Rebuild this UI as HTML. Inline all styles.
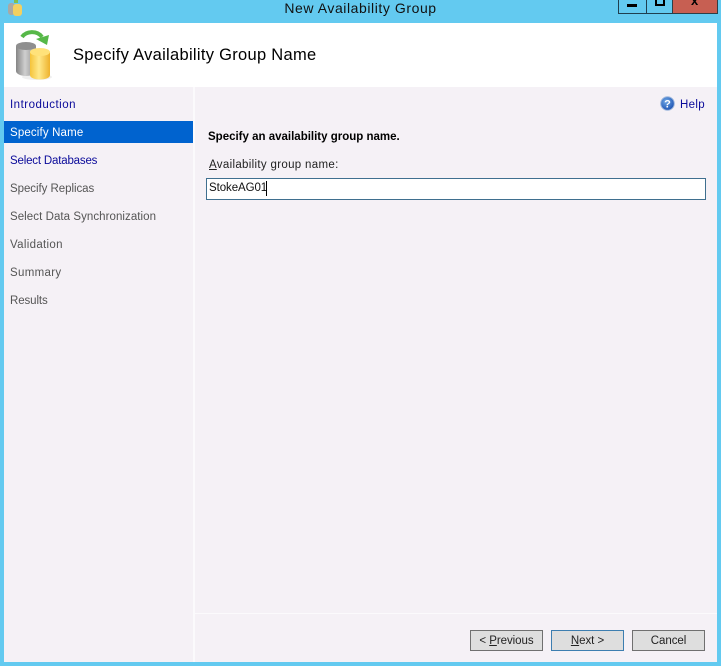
<!DOCTYPE html>
<html><head><meta charset="utf-8"><style>
html,body{margin:0;padding:0}
body{width:721px;height:666px;overflow:hidden;position:relative;background:#63caf0;font-family:"Liberation Sans",sans-serif;font-size:11.5px}
.a{position:absolute;white-space:nowrap}
.t{line-height:14px;letter-spacing:.32px}
.btn{position:absolute;top:630px;width:71px;height:19px;background:#dedede;border:1px solid #707070;text-align:center;line-height:21px;color:#222;font-size:11.5px;letter-spacing:-.05px}
u{text-decoration:underline}
</style></head><body>
<div class="a" style="left:0;top:-1px;width:721px;text-align:center;font-size:14px;line-height:18px;color:#111;letter-spacing:.57px">New Availability Group</div>
<svg class="a" style="left:7px;top:0" width="16" height="16" viewBox="0 0 16 16"><rect x="1" y="3" width="7" height="12" rx="3" fill="#a9a9a4"/><rect x="6" y="4" width="9" height="12" rx="3" fill="#f3d060"/><rect x="7" y="0" width="4" height="3" fill="#7fbf50"/></svg>
<div class="a" style="left:618px;top:-1px;width:100px;height:15px;box-sizing:border-box;border:1px solid #1f3f50;border-top:0"></div>
<div class="a" style="left:646px;top:0;width:1px;height:14px;background:#1f3f50"></div>
<div class="a" style="left:672px;top:0;width:46px;height:14px;box-sizing:border-box;background:#c75f52;border:1px solid #2d3f47;border-top:0"></div>
<div class="a" style="left:627px;top:4px;width:10px;height:3px;background:#000"></div>
<div class="a" style="left:655px;top:-3px;width:10px;height:9px;box-sizing:border-box;border:2px solid #000"></div>
<div class="a" style="left:691px;top:-7px;font:bold 13px/16px 'Liberation Sans',sans-serif;color:#000">x</div>

<div class="a" style="left:4px;top:23px;width:713px;height:64px;background:#fff"></div>
<div class="a" style="left:4px;top:87px;width:189px;height:575px;background:#f5f1f6"></div>
<div class="a" style="left:193px;top:87px;width:2px;height:575px;background:#fbfafc"></div>
<div class="a" style="left:195px;top:87px;width:522px;height:575px;background:#f5f1f6"></div>
<div class="a" style="left:195px;top:613px;width:522px;height:1px;background:#fbfafc"></div>

<svg class="a" style="left:13px;top:29px" width="44" height="54" viewBox="0 0 44 54">
<defs>
<linearGradient id="g" x1="0" x2="1" y1="0" y2="0"><stop offset="0" stop-color="#858585"/><stop offset=".45" stop-color="#cfcfcf"/><stop offset="1" stop-color="#8d8d8d"/></linearGradient>
<linearGradient id="y" x1="0" x2="1" y1="0" y2="0"><stop offset="0" stop-color="#f5c33a"/><stop offset=".45" stop-color="#ffe98a"/><stop offset="1" stop-color="#eeb12c"/></linearGradient>
</defs>
<ellipse cx="24" cy="48" rx="15" ry="3" fill="#efefef"/>
<path d="M3 17v25c0 3 5 5 10 5s10-2 10-5V17z" fill="url(#g)"/>
<ellipse cx="13" cy="17" rx="10" ry="4" fill="#8f8f8f"/>
<path d="M17 23v23c0 3 5 4.500 10 4.500S37 49 37 46V23z" fill="url(#y)"/>
<ellipse cx="27" cy="23" rx="10" ry="4" fill="#ffe27a"/>
<path d="M9 8C13 2 24 1 29 8" fill="none" stroke="#56b848" stroke-width="4"/>
<path d="M23 10L36 6L34 16Z" fill="#56b848"/>
</svg>
<div class="a" style="left:73px;top:45px;font-size:16.5px;line-height:20px;color:#000;letter-spacing:.29px">Specify Availability Group Name</div>

<div class="a" style="left:4px;top:121px;width:189px;height:22px;background:#0063cf"></div>
<div class="a t" style="left:10px;top:98px;color:#0a0a9a;letter-spacing:.49px">Introduction</div>
<div class="a t" style="left:10px;top:126px;color:#fff;letter-spacing:.15px">Specify Name</div>
<div class="a t" style="left:10px;top:154px;color:#0a0a9a;letter-spacing:-.18px">Select Databases</div>
<div class="a t" style="left:10px;top:182px;color:#555;letter-spacing:-.05px">Specify Replicas</div>
<div class="a t" style="left:10px;top:210px;color:#555;letter-spacing:.06px">Select Data Synchronization</div>
<div class="a t" style="left:10px;top:238px;color:#555">Validation</div>
<div class="a t" style="left:10px;top:266px;color:#555">Summary</div>
<div class="a t" style="left:10px;top:294px;color:#555;letter-spacing:-.1px">Results</div>

<svg class="a" style="left:660px;top:96px" width="15" height="15" viewBox="0 0 15 15"><defs><radialGradient id="b" cx=".4" cy=".35" r=".7"><stop offset="0" stop-color="#6fa8e6"/><stop offset="1" stop-color="#1a4fb0"/></radialGradient></defs><circle cx="7.500" cy="7.500" r="6.800" fill="url(#b)" stroke="#9db7dc"/><text x="7.500" y="11.500" text-anchor="middle" font-family="Liberation Sans" font-weight="bold" font-size="11" fill="#fff">?</text></svg>
<div class="a t" style="left:680px;top:98px;color:#0a0a9a">Help</div>

<div class="a t" style="left:208px;top:130px;font-weight:bold;color:#000;letter-spacing:0">Specify an availability group name.</div>
<div class="a t" style="left:209px;top:158px;color:#222"><u>A</u>vailability group name:</div>
<div class="a" style="left:206px;top:178px;width:500px;height:22px;box-sizing:border-box;background:#fff;border:1px solid #3f6f8f"></div>
<div class="a t" style="left:209px;top:181px;color:#111;letter-spacing:-.08px">StokeAG01</div>
<div class="a" style="left:266px;top:181px;width:1px;height:15px;background:#000"></div>

<div class="btn" style="left:470px"><span>&lt; <u>P</u>revious</span></div>
<div class="btn" style="left:551px;border-color:#3d7eb0"><span><u>N</u>ext &gt;</span></div>
<div class="btn" style="left:632px"><span>Cancel</span></div>
</body></html>
